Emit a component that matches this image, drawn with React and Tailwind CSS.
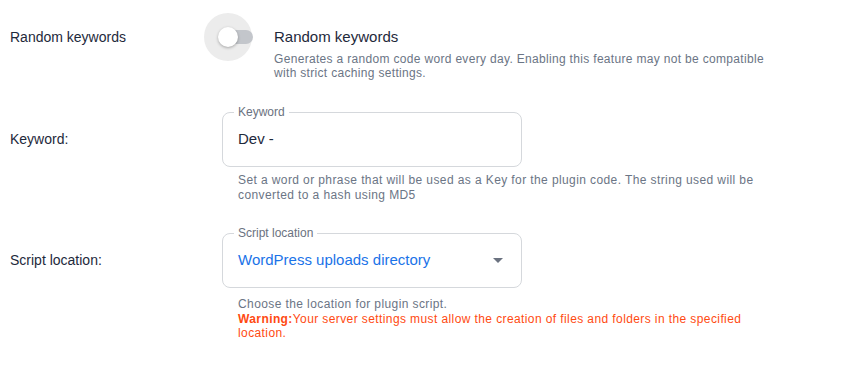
import { useState } from 'react'

function Toggle({ on, onChange }) {
  return (
    <button
      type="button"
      onClick={() => onChange(!on)}
      className="relative w-[48px] h-[48px] -ml-[18px] shrink-0"
    >
      <span className="absolute inset-0 rounded-full bg-[#ececec]" />
      <span className="absolute left-[15px] top-[17px] w-[34px] h-[14px] rounded-full bg-[#c3c6cb]" />
      <span className="absolute left-[14px] top-[14px] w-[20px] h-[20px] rounded-full bg-white shadow-[0_1px_3px_rgba(0,0,0,0.3)]" />
    </button>
  )
}

function OutlinedField({ legend, children }) {
  return (
    <div className="relative w-[300px] h-[55px] border border-[#d5d8dc] rounded-[8px] flex items-center px-[15px]">
      <span className="absolute -top-[8px] left-[11px] px-[4px] bg-white text-[12px] leading-[14px] text-[#6b7280]">
        {legend}
      </span>
      {children}
    </div>
  )
}

export default function App() {
  const [random, setRandom] = useState(false)
  const [keyword, setKeyword] = useState('Dev -')

  return (
    <div className="bg-white min-h-[388px] pl-[10px] pt-[13px] font-['Liberation_Sans',Arial,sans-serif] text-[#1e293b]">
      {/* Random keywords */}
      <div className="flex items-start">
        <div className="w-[212px] h-[48px] flex items-center text-[14px]">Random keywords</div>
        <Toggle on={random} onChange={setRandom} />
        <div className="ml-[22px] pt-[15px]">
          <div className="text-[15px] leading-[18px]">Random keywords</div>
          <p className="mt-[6px] w-[505px] text-[12px] leading-[14px] tracking-[0.32px] text-[#6b7585]">
            Generates a random code word every day. Enabling this feature may not be compatible with strict caching settings.
          </p>
        </div>
      </div>

      {/* Keyword */}
      <div className="flex items-start mt-[32px]">
        <div className="w-[212px] h-[55px] flex items-center text-[14px]">Keyword:</div>
        <div>
          <OutlinedField legend="Keyword">
            <input
              value={keyword}
              onChange={e => setKeyword(e.target.value)}
              className="w-full outline-none text-[15px] text-[#1e293b] bg-transparent"
            />
          </OutlinedField>
          <p className="mt-[6px] ml-[16px] w-[560px] text-[12px] leading-[15px] tracking-[0.4px] text-[#6b7585]">
            Set a word or phrase that will be used as a Key for the plugin code. The string used will be converted to a hash using MD5
          </p>
        </div>
      </div>

      {/* Script location */}
      <div className="flex items-start mt-[30px]">
        <div className="w-[212px] h-[55px] flex items-center text-[14px]">Script location:</div>
        <div>
          <OutlinedField legend="Script location">
            <span className="flex-1 text-[15px] text-[#1a73e8]">WordPress uploads directory</span>
            <svg width="10" height="5" viewBox="0 0 10 5" className="mr-[3px]">
              <path d="M0 0h10L5 5z" fill="#6b7280" />
            </svg>
          </OutlinedField>
          <div className="mt-[9px] ml-[16px] w-[530px] text-[12px] leading-[15px] tracking-[0.4px]">
            <p className="text-[#6b7585]">Choose the location for plugin script.</p>
            <p className="text-[#ff4a12] leading-[14px]">
              <b className="font-bold">Warning:</b>Your server settings must allow the creation of files and folders in the specified location.
            </p>
          </div>
        </div>
      </div>
    </div>
  )
}
